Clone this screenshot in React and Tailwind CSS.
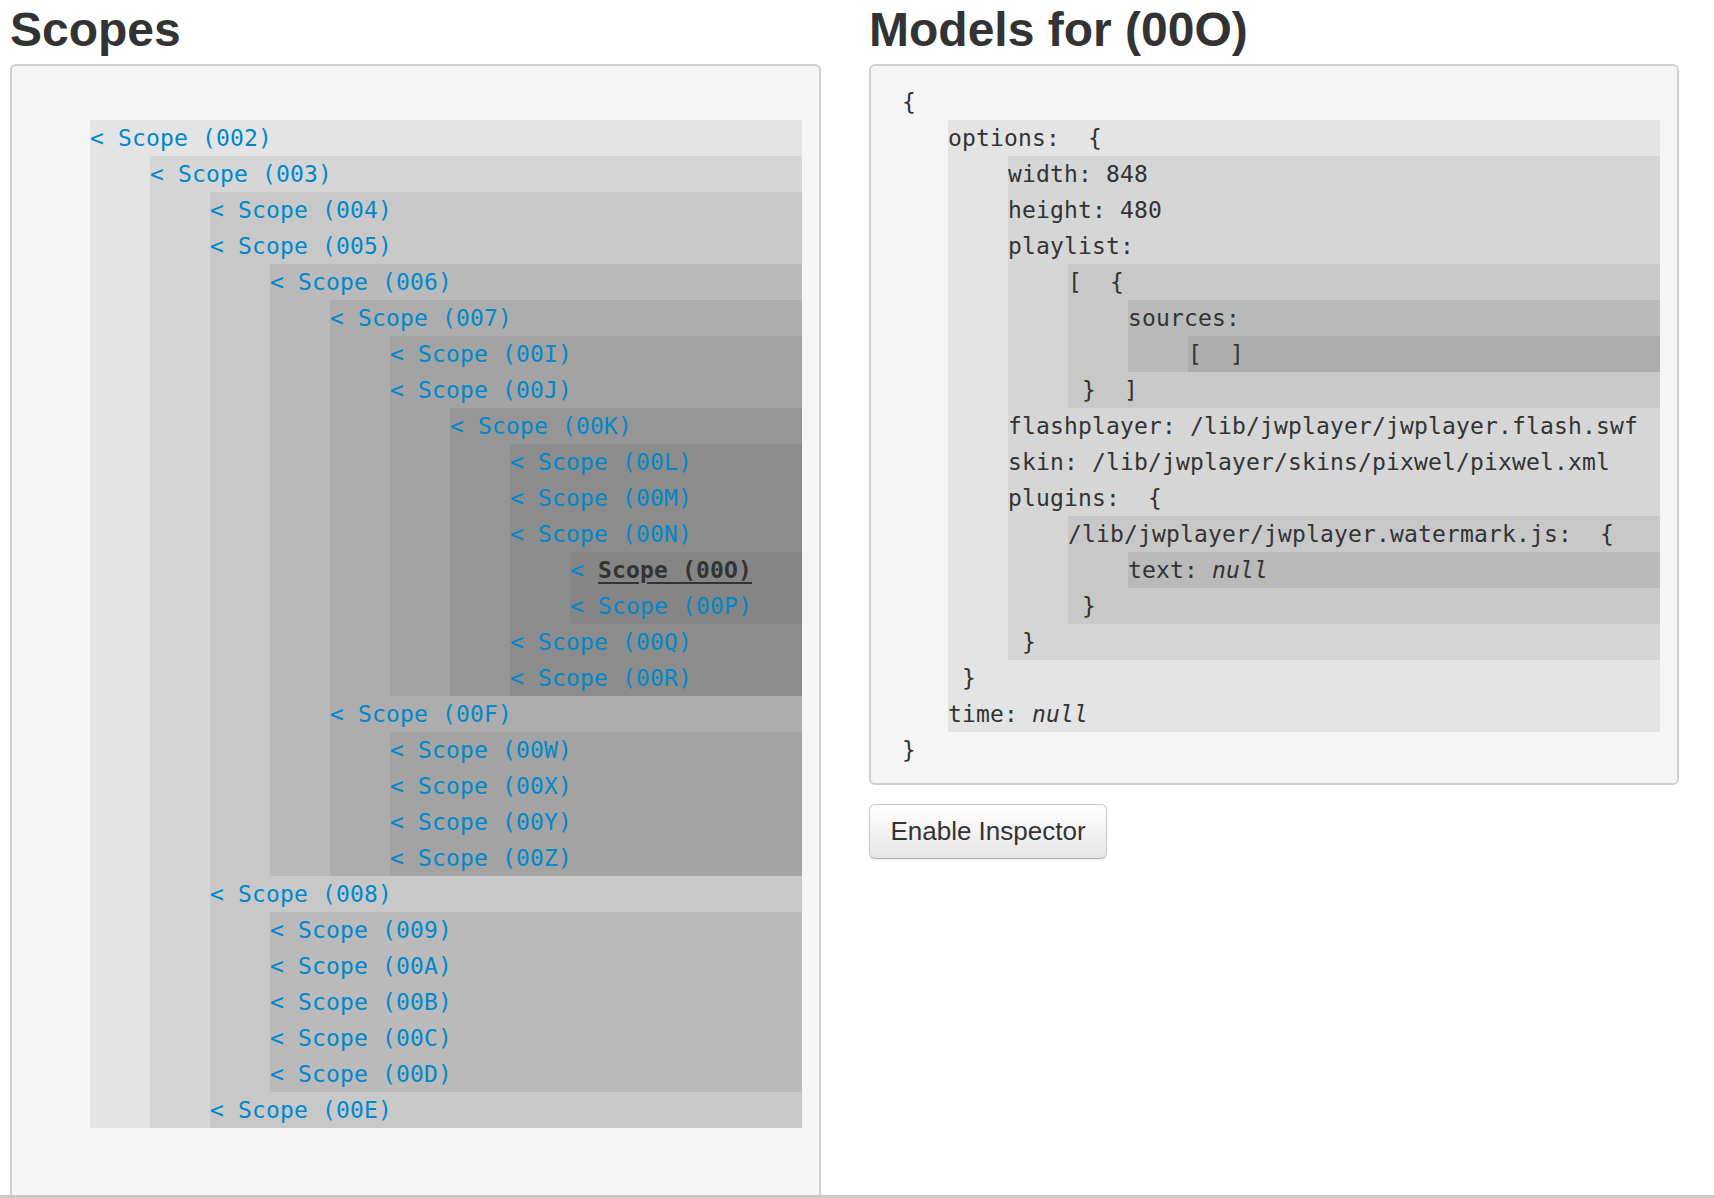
import React from 'react';

const SELECTED = '00O';

const TREE = {
  id: '002',
  children: [
    {
      id: '003',
      children: [
        { id: '004' },
        {
          id: '005',
          children: [
            {
              id: '006',
              children: [
                {
                  id: '007',
                  children: [
                    { id: '00I' },
                    {
                      id: '00J',
                      children: [
                        {
                          id: '00K',
                          children: [
                            { id: '00L' },
                            { id: '00M' },
                            { id: '00N', children: [{ id: '00O' }, { id: '00P' }] },
                            { id: '00Q' },
                            { id: '00R' },
                          ],
                        },
                      ],
                    },
                  ],
                },
                {
                  id: '00F',
                  children: [{ id: '00W' }, { id: '00X' }, { id: '00Y' }, { id: '00Z' }],
                },
              ],
            },
          ],
        },
        {
          id: '008',
          children: [{ id: '009' }, { id: '00A' }, { id: '00B' }, { id: '00C' }, { id: '00D' }],
        },
        { id: '00E' },
      ],
    },
  ],
};

// background of each nesting level, gets darker the deeper we go
const DEPTH_BG = [
  'bg-[#e4e4e4]',
  'bg-[#d6d6d6]',
  'bg-[#c8c8c8]',
  'bg-[#bababa]',
  'bg-[#adadad]',
  'bg-[#a3a3a3]',
  'bg-[#969696]',
  'bg-[#8c8c8c]',
  'bg-[#858585]',
];

const mono = "font-['DejaVu_Sans_Mono',monospace] text-[23px] tracking-[0.15px]";
const sans = "font-['Liberation_Sans',Arial,sans-serif]";

function Block({ depth, children }) {
  return <div className={`ml-[60px] ${DEPTH_BG[depth - 1]}`}>{children}</div>;
}

function Row({ children }) {
  return <div className="h-[36px] leading-[36px] whitespace-pre text-[#333]">{children}</div>;
}

function ScopeNode({ node, depth }) {
  const isSelected = node.id === SELECTED;
  return (
    <div>
      <div className="h-[36px] leading-[36px] whitespace-pre text-[#0088cc]">
        {'< '}
        {isSelected ? (
          <span className="text-[#333] font-bold underline underline-offset-[4px]">Scope ({node.id})</span>
        ) : (
          <span>Scope ({node.id})</span>
        )}
      </div>
      {node.children && (
        <Block depth={depth + 1}>
          {node.children.map(c => (
            <ScopeNode key={c.id} node={c} depth={depth + 1} />
          ))}
        </Block>
      )}
    </div>
  );
}

function Null() {
  return <span className="italic">null</span>;
}

export default function App() {
  return (
    <div className="h-[1198px] flex flex-col bg-white overflow-hidden">
      <div className="flex-1 min-h-0 flex gap-[48px] pl-[10px] overflow-hidden">
        {/* Scopes */}
        <div className="w-[811px] flex flex-col">
          <h2 className={`${sans} text-[48px] leading-[48px] font-bold text-[#333] mt-[6px] mb-[10px]`}>Scopes</h2>
          <div className={`flex-1 rounded-t-[6px] border-2 border-b-0 border-[#d0d0d0] bg-[#f5f5f5] pt-[18px] pl-[18px] pr-[17px] ${mono}`}>
            <div className="h-[36px]" />
            <Block depth={1}>
              <ScopeNode node={TREE} depth={1} />
            </Block>
          </div>
        </div>

        {/* Models */}
        <div className="w-[810px] flex flex-col">
          <h2 className={`${sans} text-[48px] leading-[48px] font-bold text-[#333] mt-[6px] mb-[10px]`}>Models for (00O)</h2>
          <div className={`rounded-[6px] border-2 border-[#d0d0d0] bg-[#f5f5f5] pt-[18px] pb-[15px] pl-[17px] pr-[17px] ${mono}`}>
            <Row>{' {'}</Row>
            <Block depth={1}>
              <Row>{'options:  {'}</Row>
              <Block depth={2}>
                <Row>width: 848</Row>
                <Row>height: 480</Row>
                <Row>playlist:</Row>
                <Block depth={3}>
                  <Row>{'[  {'}</Row>
                  <Block depth={4}>
                    <Row>sources:</Row>
                    <Block depth={5}>
                      <Row>{'[  ]'}</Row>
                    </Block>
                  </Block>
                  <Row>{' }  ]'}</Row>
                </Block>
                <Row>flashplayer: /lib/jwplayer/jwplayer.flash.swf</Row>
                <Row>skin: /lib/jwplayer/skins/pixwel/pixwel.xml</Row>
                <Row>{'plugins:  {'}</Row>
                <Block depth={3}>
                  <Row>{'/lib/jwplayer/jwplayer.watermark.js:  {'}</Row>
                  <Block depth={4}>
                    <Row>text: <Null /></Row>
                  </Block>
                  <Row>{' }'}</Row>
                </Block>
                <Row>{' }'}</Row>
              </Block>
              <Row>{' }'}</Row>
              <Row>time: <Null /></Row>
            </Block>
            <Row>{' }'}</Row>
          </div>

          <div className="mt-[19px]">
            <button
              className={`${sans} w-[238px] h-[55px] rounded-[6px] border border-[#c8c8c8] border-b-[#b0b0b0] bg-linear-to-b from-white to-[#e6e6e6] shadow-[0_1px_2px_rgba(0,0,0,0.08)] text-[26px] text-[#333]`}
            >
              Enable Inspector
            </button>
          </div>
        </div>
      </div>
      <div className="h-[3px] bg-[#c8c8c8]" />
    </div>
  );
}
